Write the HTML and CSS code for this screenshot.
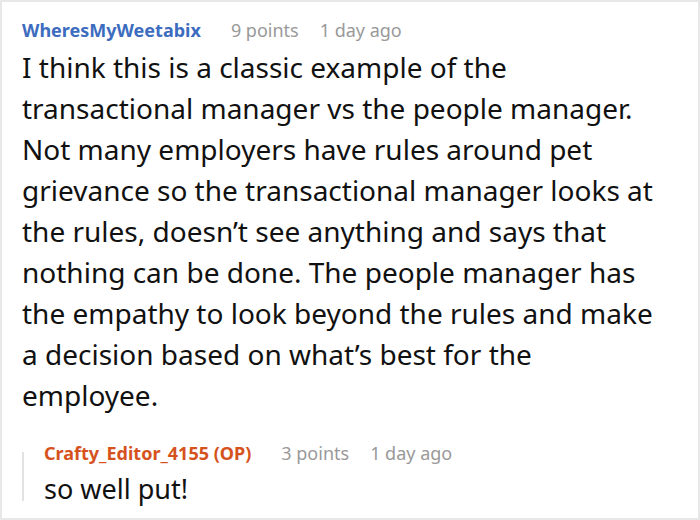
FILE: index.html
```html
<!DOCTYPE html>
<html>
<head>
<meta charset="utf-8">
<link rel="stylesheet" href="styles.css">
</head>
<body>
<div class="card">
  <div class="comment">
    <div class="meta">
      <span class="author">WheresMyWeetabix</span>
      <span class="points">9 points</span>
      <span class="time">1 day ago</span>
    </div>
    <p class="text">I think this is a classic example of the transactional manager vs the people manager. Not many employers have rules around pet grievance so the transactional manager looks at the rules, doesn’t see anything and says that nothing can be done. The people manager has the empathy to look beyond the rules and make a decision based on what’s best for the employee.</p>
    <div class="reply">
      <div class="meta">
        <span class="author op">Crafty_Editor_4155 (OP)</span>
        <span class="points">3 points</span>
        <span class="time">1 day ago</span>
      </div>
      <p class="text reply-text">so well put!</p>
    </div>
  </div>
</div>
</body>
</html>
```
FILE: styles.css
```css
html, body {
  margin: 0;
  padding: 0;
  background: #fff;
}
.card {
  box-sizing: border-box;
  width: 700px;
  height: 520px;
  border: 2px solid #e8e8e8;
  padding: 16px 0 0 20px;
  font-family: "Noto Sans", "Open Sans", sans-serif;
  overflow: hidden;
}
.comment {
  width: 640px;
}
.meta {
  display: flex;
  align-items: baseline;
  font-size: 18px;
  line-height: 24px;
  color: #999;
  white-space: nowrap;
}
.author {
  font-weight: 700;
  color: #3d6cbf;
  margin-right: 30px;
}
.author.op {
  color: #d6521d;
}
.points {
  margin-right: 21px;
}
.text {
  margin: 5px 0 0;
  font-size: 28px;
  line-height: 41px;
  color: #111;
}
.reply {
  position: relative;
  margin-top: 25px;
  padding-left: 22px;
}
.reply::before {
  content: "";
  position: absolute;
  left: 0;
  top: 11px;
  width: 2px;
  height: 49px;
  background: #e2e2e2;
}
.reply-text {
  margin-top: 3px;
  font-size: 27px;
}
```
